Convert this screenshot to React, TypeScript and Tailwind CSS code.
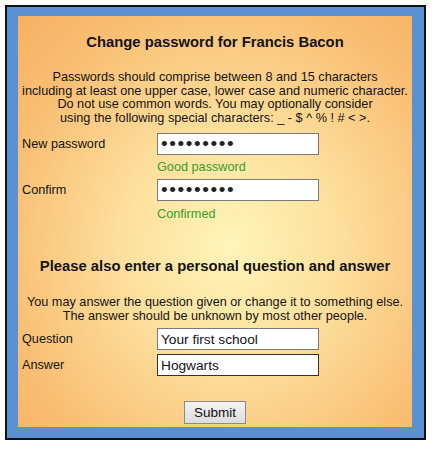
import React from "react";

const font = { fontFamily: '"Liberation Sans", Arial, sans-serif' };

export default function App() {
  return (
    <div className="bg-white w-[435px] h-[449px] pt-[5px] pl-[5px]" style={font}>
      <div className="w-[421px] h-[435px] border-2 border-[#111] bg-[#5b91d2] pt-[9px] pl-[11px] pr-[12px] pb-[11px]">
        <div className="w-[394px] h-[411px] bg-[radial-gradient(ellipse_at_54%_56%,#fef5b8_0%,#fde09e_35%,#f9bf74_75%,#f7b062_100%)] pt-[18px] pb-[4px] flex flex-col text-[#141414]">
          <h1 className="text-center font-bold text-[14.8px] leading-[17px]">
            Change password for Francis Bacon
          </h1>
          <p className="mt-[20px] text-center text-[12.7px] leading-[13.6px]">
            Passwords should comprise between 8 and 15 characters
            <br />
            including at least one upper case, lower case and numeric character.
            <br />
            Do not use common words. You may optionally consider
            <br />
            using the following special characters: _ - $ ^ % ! # &lt; &gt;.
          </p>

          <div className="mt-[8px] pl-[4px] flex items-center">
            <label className="w-[135px] text-[12.7px] leading-[14px]">New password</label>
            <input
              type="password"
              readOnly
              value="abcdefghi"
              className="w-[162px] h-[22px] bg-white border border-[#7a7a7a] pl-[3px] text-[19px] tracking-[1.6px] text-[#222] outline-none"
              style={font}
            />
          </div>
          <div className="mt-[5px] pl-[139px] text-[12.7px] leading-[14px] text-[#35a026]">Good password</div>

          <div className="mt-[5px] pl-[4px] flex items-center">
            <label className="w-[135px] text-[12.7px] leading-[14px]">Confirm</label>
            <input
              type="password"
              readOnly
              value="abcdefghi"
              className="w-[162px] h-[22px] bg-white border border-[#7a7a7a] pl-[3px] text-[19px] tracking-[1.6px] text-[#222] outline-none"
              style={font}
            />
          </div>
          <div className="mt-[6px] pl-[139px] text-[12.7px] leading-[14px] text-[#35a026]">Confirmed</div>

          <h2 className="mt-[37px] text-center font-bold text-[14.8px] leading-[17px]">
            Please also enter a personal question and answer
          </h2>
          <p className="mt-[20px] text-center text-[12.7px] leading-[14px]">
            You may answer the question given or change it to something else.
            <br />
            The answer should be unknown by most other people.
          </p>

          <div className="mt-[5px] pl-[4px] flex items-center">
            <label className="w-[135px] text-[12.7px] leading-[14px]">Question</label>
            <input
              type="text"
              readOnly
              value="Your first school"
              className="w-[162px] h-[22px] bg-white border border-[#7a7a7a] pl-[3px] text-[13.7px] text-[#111] outline-none"
              style={font}
            />
          </div>
          <div className="mt-[4px] pl-[4px] flex items-center">
            <label className="w-[135px] text-[12.7px] leading-[14px]">Answer</label>
            <input
              type="text"
              readOnly
              value="Hogwarts"
              className="w-[162px] h-[22px] bg-white border border-[#333] pl-[3px] text-[13.7px] text-[#111] outline-none"
              style={font}
            />
          </div>

          <div className="mt-[25px] flex justify-center">
            <button
              type="button"
              className="w-[62px] h-[23px] border border-[#8a8a8a] bg-[linear-gradient(#f4f4f4,#dcdcdc)] text-[13.5px] text-[#111] leading-none"
              style={font}
            >
              Submit
            </button>
          </div>
        </div>
      </div>
    </div>
  );
}
